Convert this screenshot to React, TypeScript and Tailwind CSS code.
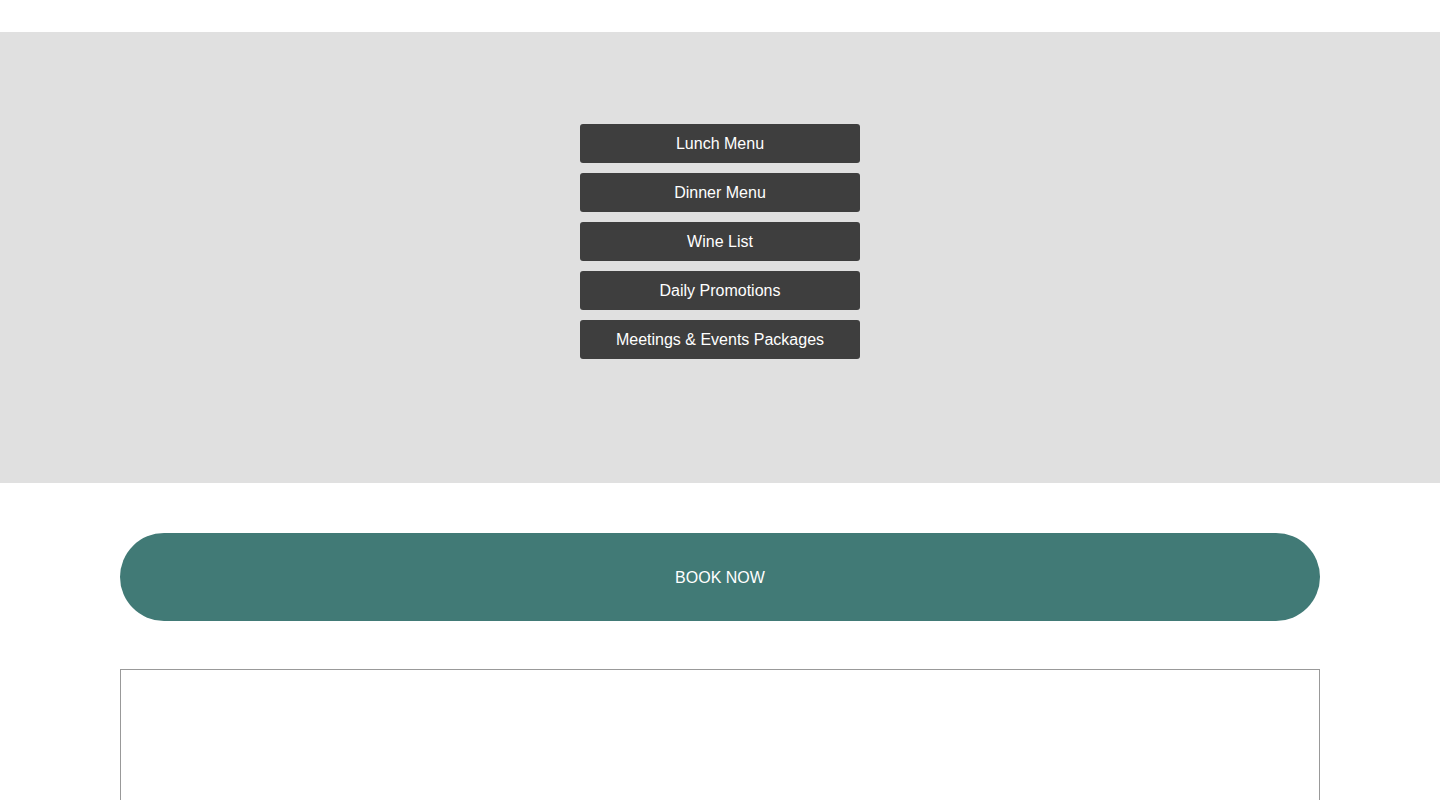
import React from "react";

const menuLinks = [
  "Lunch Menu",
  "Dinner Menu",
  "Wine List",
  "Daily Promotions",
  "Meetings & Events Packages",
];

export default function App() {
  return (
    <div
      className="min-h-screen bg-white pt-8 pb-10"
      style={{ fontFamily: '"Liberation Sans", Arial, sans-serif' }}
    >
      {/* Menu downloads band */}
      <section className="h-[451px] bg-[#e0e0e0] pt-[92px]">
        <div className="mx-auto flex w-[280px] flex-col gap-[10px]">
          {menuLinks.map((label) => (
            <a
              key={label}
              href="#"
              className="flex h-[39px] items-center justify-center rounded-[3px] bg-[#3e3e3e] text-base text-white"
            >
              {label}
            </a>
          ))}
        </div>
      </section>

      {/* Booking call to action */}
      <div className="mx-auto mt-[50px] w-[1200px]">
        <button className="flex h-[88px] w-full items-center justify-center rounded-full bg-[#417a76] pt-[2px] text-base text-white">
          BOOK NOW
        </button>
      </div>

      {/* Embedded widget frame */}
      <div className="mx-auto mt-[48px] h-[400px] w-[1200px] border border-[#999999]" />
    </div>
  );
}
